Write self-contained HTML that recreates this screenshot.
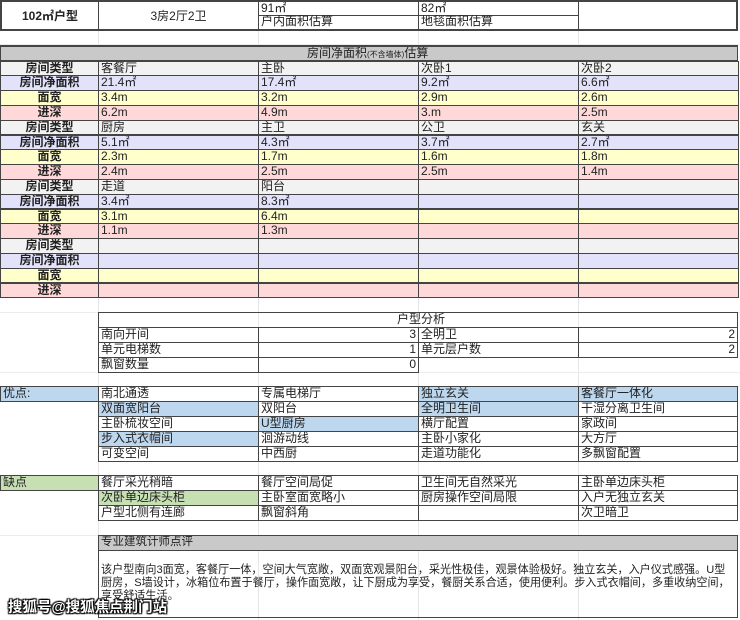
<!DOCTYPE html>
<html><head><meta charset="utf-8"><style>
*{box-sizing:border-box;margin:0;padding:0}
body{width:740px;height:620px;background:#fff;position:relative;overflow:hidden;font-family:"Liberation Sans","Noto Sans CJK SC",sans-serif;font-size:12px;color:#222}
.c{position:absolute;border:1px solid #444;line-height:13px;white-space:nowrap;overflow:hidden;padding-left:2px}
.ctr{text-align:center;padding-left:0}
.rt{text-align:right;padding-right:2px}
.b{font-weight:bold}
.g{background:#f2f2f2}.l{background:#e2e2fb}.y{background:#ffffcc}.p{background:#ffd9d9}
.bl{background:#bdd7ee}.gr{background:#c6e0b4}.hd{background:#c9c9c9}
.vl{position:absolute;top:0;bottom:0;width:1px;background:#e6e6e6}
.hl{position:absolute;left:0;right:0;height:1px;background:#ececec}
.wm{position:absolute;left:8px;top:596px;font-size:14.5px;font-weight:bold;color:#fff;text-shadow:0 0 2px #000,1px 1px 1px #000,-1px -1px 1px #000,1px -1px 1px #000,-1px 1px 1px #000}
</style></head><body>
<div class="vl" style="left:98px"></div><div class="vl" style="left:258px"></div><div class="vl" style="left:418px"></div><div class="vl" style="left:578px"></div>
<div class="hl" style="top:44px"></div><div class="hl" style="top:312px"></div><div class="hl" style="top:372px"></div><div class="hl" style="top:386px"></div><div class="hl" style="top:475px"></div><div class="hl" style="top:535px"></div>

<div class="c ctr b" style="left:0;top:0;width:99px;height:31px;line-height:29px;border-width:2px 1px 2px 2px">102㎡户型</div>
<div class="c ctr" style="left:98px;top:0;width:161px;height:31px;line-height:29px;border-width:2px 1px 2px 1px">3房2厅2卫</div>
<div class="c" style="left:258px;top:0;width:161px;height:16px;border-width:2px 1px 1px 1px">91㎡</div>
<div class="c" style="left:258px;top:15px;width:161px;height:16px;border-width:0 1px 2px 1px">户内面积估算</div>
<div class="c" style="left:418px;top:0;width:161px;height:16px;border-width:2px 1px 1px 1px">82㎡</div>
<div class="c" style="left:418px;top:15px;width:161px;height:16px;border-width:0 1px 2px 1px">地毯面积估算</div>
<div class="c" style="left:578px;top:0;width:160px;height:31px;border-width:2px 2px 2px 1px"></div>

<div class="c hd" style="left:0;top:45px;width:738px;height:16px;border-width:2px 1px 1px 1px;padding-left:306px">房间净面积<span style="font-size:8px">(不含墙体)</span>估算</div>

<div id="grid"></div>
<script>
var rows=[
['房间类型','g',['客餐厅','主卧','次卧1','次卧2']],
['房间净面积','l',['21.4㎡','17.4㎡','9.2㎡','6.6㎡']],
['面宽','y',['3.4m','3.2m','2.9m','2.6m']],
['进深','p',['6.2m','4.9m','3.m','2.5m']],
['房间类型','g',['厨房','主卫','公卫','玄关']],
['房间净面积','l',['5.1㎡','4.3㎡','3.7㎡','2.7㎡']],
['面宽','y',['2.3m','1.7m','1.6m','1.8m']],
['进深','p',['2.4m','2.5m','2.5m','1.4m']],
['房间类型','g',['走道','阳台','','']],
['房间净面积','l',['3.4㎡','8.3㎡','','']],
['面宽','y',['3.1m','6.4m','','']],
['进深','p',['1.1m','1.3m','','']],
['房间类型','g',['','','','']],
['房间净面积','l',['','','','']],
['面宽','y',['','','','']],
['进深','p',['','','','']]];
var xs=[0,98,258,418,578,738],h='';
rows.forEach(function(r,i){var t=(60.5+i*14.8).toFixed(1);
h+='<div class="c ctr b '+r[1]+'" style="left:0;top:'+t+'px;width:99px;height:15.8px">'+r[0]+'</div>';
for(var j=0;j<4;j++)h+='<div class="c '+r[1]+'" style="left:'+xs[j+1]+'px;top:'+t+'px;width:'+(xs[j+2]-xs[j+1]+1)+'px;height:15.8px">'+r[2][j]+'</div>';});
document.getElementById('grid').innerHTML=h;
</script>

<div class="c" style="left:98px;top:312px;width:640px;height:16px;padding-left:298px">户型分析</div>
<div class="c" style="left:98px;top:327px;width:161px;height:16px">南向开间</div>
<div class="c rt" style="left:258px;top:327px;width:161px;height:16px">3</div>
<div class="c" style="left:418px;top:327px;width:161px;height:16px">全明卫</div>
<div class="c rt" style="left:578px;top:327px;width:160px;height:16px">2</div>
<div class="c" style="left:98px;top:342px;width:161px;height:16px">单元电梯数</div>
<div class="c rt" style="left:258px;top:342px;width:161px;height:16px">1</div>
<div class="c" style="left:418px;top:342px;width:161px;height:16px">单元层户数</div>
<div class="c rt" style="left:578px;top:342px;width:160px;height:16px">2</div>
<div class="c" style="left:98px;top:357px;width:161px;height:16px">飘窗数量</div>
<div class="c rt" style="left:258px;top:357px;width:161px;height:16px">0</div>

<div class="c bl" style="left:0;top:386px;width:99px;height:16px">优点:</div>
<div class="c" style="left:98px;top:386px;width:161px;height:16px">南北通透</div>
<div class="c" style="left:258px;top:386px;width:161px;height:16px">专属电梯厅</div>
<div class="c bl" style="left:418px;top:386px;width:161px;height:16px">独立玄关</div>
<div class="c bl" style="left:578px;top:386px;width:160px;height:16px">客餐厅一体化</div>
<div class="c bl" style="left:98px;top:401px;width:161px;height:16px">双面宽阳台</div>
<div class="c" style="left:258px;top:401px;width:161px;height:16px">双阳台</div>
<div class="c bl" style="left:418px;top:401px;width:161px;height:16px">全明卫生间</div>
<div class="c" style="left:578px;top:401px;width:160px;height:16px">干湿分离卫生间</div>
<div class="c" style="left:98px;top:416px;width:161px;height:16px">主卧梳妆空间</div>
<div class="c bl" style="left:258px;top:416px;width:161px;height:16px">U型厨房</div>
<div class="c" style="left:418px;top:416px;width:161px;height:16px">横厅配置</div>
<div class="c" style="left:578px;top:416px;width:160px;height:16px">家政间</div>
<div class="c bl" style="left:98px;top:431px;width:161px;height:16px">步入式衣帽间</div>
<div class="c" style="left:258px;top:431px;width:161px;height:16px">洄游动线</div>
<div class="c" style="left:418px;top:431px;width:161px;height:16px">主卧小家化</div>
<div class="c" style="left:578px;top:431px;width:160px;height:16px">大方厅</div>
<div class="c" style="left:98px;top:446px;width:161px;height:16px">可变空间</div>
<div class="c" style="left:258px;top:446px;width:161px;height:16px">中西厨</div>
<div class="c" style="left:418px;top:446px;width:161px;height:16px">走道功能化</div>
<div class="c" style="left:578px;top:446px;width:160px;height:16px">多飘窗配置</div>

<div class="c gr" style="left:0;top:475px;width:99px;height:16px">缺点</div>
<div class="c" style="left:98px;top:475px;width:161px;height:16px">餐厅采光稍暗</div>
<div class="c" style="left:258px;top:475px;width:161px;height:16px">餐厅空间局促</div>
<div class="c" style="left:418px;top:475px;width:161px;height:16px">卫生间无自然采光</div>
<div class="c" style="left:578px;top:475px;width:160px;height:16px">主卧单边床头柜</div>
<div class="c gr" style="left:98px;top:490px;width:161px;height:16px">次卧单边床头柜</div>
<div class="c" style="left:258px;top:490px;width:161px;height:16px">主卧室面宽略小</div>
<div class="c" style="left:418px;top:490px;width:161px;height:16px">厨房操作空间局限</div>
<div class="c" style="left:578px;top:490px;width:160px;height:16px">入户无独立玄关</div>
<div class="c" style="left:98px;top:505px;width:161px;height:16px">户型北侧有连廊</div>
<div class="c" style="left:258px;top:505px;width:161px;height:16px">飘窗斜角</div>
<div class="c" style="left:418px;top:505px;width:161px;height:16px"></div>
<div class="c" style="left:578px;top:505px;width:160px;height:16px">次卫暗卫</div>

<div class="c hd" style="left:98px;top:535px;width:640px;height:16px;font-size:11.5px">专业建筑计师点评</div>
<div class="c" style="left:98px;top:550px;width:640px;height:68px;white-space:normal;padding:13px 2px 0 2px;line-height:13px;font-size:11.1px">该户型南向3面宽，客餐厅一体，空间大气宽敞，双面宽观景阳台，采光性极佳，观景体验极好。独立玄关，入户仪式感强。U型厨房，S墙设计，冰箱位布置于餐厅，操作面宽敞，让下厨成为享受，餐厨关系合适，使用便利。步入式衣帽间，多重收纳空间，享受舒适生活。</div>

<div class="wm">搜狐号@搜狐焦点荆门站</div>
</body></html>
